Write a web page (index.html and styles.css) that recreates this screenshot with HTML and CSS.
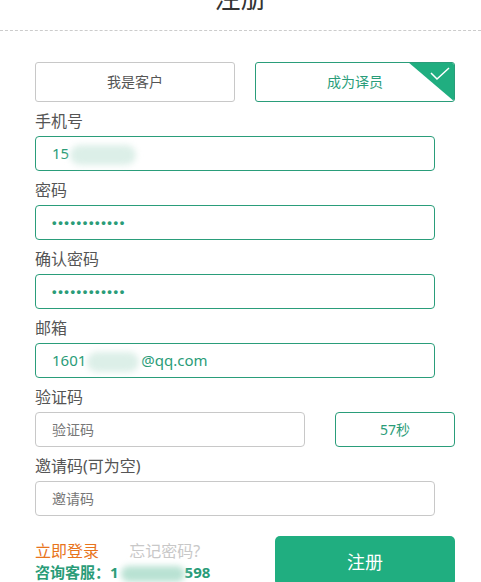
FILE: index.html
```html
<!DOCTYPE html>
<html lang="zh-CN">
<head>
    <meta charset="UTF-8">
    <meta name="viewport" content="width=device-width, initial-scale=1.0">
    <title>注册</title>
    <link rel="stylesheet" href="styles.css">
</head>
<body>
    <h2 class="title">注册</h2>

    <div class="container">
        <div class="tabs">
            <div class="tab">我是客户</div>
            <div class="tab active">
                成为译员
                <span class="corner">
                    <svg width="20" height="14" viewBox="0 0 20 14">
                        <polyline points="1,6 7,12 19,1" fill="none" stroke="#fff" stroke-width="1.5" />
                    </svg>
                </span>
            </div>
        </div>

        <div class="field">
            <label>手机号</label>
            <div class="input filled">15<span class="blur blur-phone"></span></div>
        </div>

        <div class="field">
            <label>密码</label>
            <div class="input filled dots">••••••••••••</div>
        </div>

        <div class="field">
            <label>确认密码</label>
            <div class="input filled dots">••••••••••••</div>
        </div>

        <div class="field">
            <label>邮箱</label>
            <div class="input filled">1601<span class="blur blur-mail"></span>@qq.com</div>
        </div>

        <div class="field">
            <label>验证码</label>
            <div class="code-row">
                <div class="input code">验证码</div>
                <div class="countdown">57秒</div>
            </div>
        </div>

        <div class="field">
            <label>邀请码(可为空)</label>
            <div class="input">邀请码</div>
        </div>

        <div class="footer">
            <div class="links">
                <div>
                    <a href="#" class="login-link">立即登录</a>
                    <a href="#" class="forgot-link">忘记密码?</a>
                </div>
                <div class="service">咨询客服：1<span class="blur blur-tel"></span>598</div>
            </div>
            <button type="button" class="submit">注册</button>
        </div>
    </div>
</body>
</html>
```

FILE: styles.css
```css
body {
    font-family: "Noto Sans", "Noto Sans CJK SC", sans-serif;
    background-color: #fff;
    margin: 0;
    padding: 0;
    overflow: hidden;
}

.title {
    margin: -22px 0 0;
    height: 53px;
    line-height: 40px;
    font-size: 26px;
    font-weight: normal;
    color: #333;
    text-align: center;
    border-bottom: 1px dashed #ccc;
    box-sizing: border-box;
}

.container {
    padding: 31px 0 0 35px;
    width: 420px;
}

.tabs {
    display: flex;
    gap: 20px;
    margin-bottom: 8px;
}

.tab {
    position: relative;
    width: 200px;
    height: 40px;
    line-height: 38px;
    box-sizing: border-box;
    border: 1px solid #c8c8c8;
    border-radius: 3px;
    text-align: center;
    font-size: 14px;
    color: #555;
    overflow: hidden;
}

.tab.active {
    border-color: #2a9d7a;
    color: #2a9d7a;
}

.corner {
    position: absolute;
    top: -1px;
    right: -1px;
    width: 47px;
    height: 40px;
    background-color: #20ae80;
    clip-path: polygon(0 0, 100% 0, 100% 100%);
}

.corner svg {
    position: absolute;
    top: 5px;
    right: 5px;
}

.field {
    margin-bottom: 8px;
}

label {
    display: block;
    height: 22px;
    line-height: 22px;
    font-size: 16px;
    color: #555;
    margin-bottom: 4px;
}

.input {
    width: 400px;
    height: 35px;
    line-height: 33px;
    box-sizing: border-box;
    border: 1px solid #c8c8c8;
    border-radius: 4px;
    padding: 0 16px;
    font-size: 14px;
    color: #777;
}

.input.filled {
    border-color: #2a9d7a;
    color: #2a9c78;
    font-size: 15px;
}

.input.dots {
    font-family: "Liberation Sans", sans-serif;
    font-size: 13px;
    letter-spacing: 1.6px;
    font-weight: bold;
}

.blur {
    display: inline-block;
    vertical-align: middle;
    height: 20px;
    border-radius: 10px;
    background-color: #dcefe8;
    filter: blur(3px);
}

.blur-phone {
    width: 66px;
    margin-left: 1px;
}

.blur-mail {
    width: 52px;
    margin: 0 2px 0 1px;
}

.blur-tel {
    width: 64px;
    height: 16px;
    margin: 0 0 0 2px;
    background-color: #b9e2d3;
}

.code-row {
    display: flex;
    justify-content: space-between;
}

.input.code {
    width: 270px;
}

.countdown {
    width: 120px;
    height: 35px;
    line-height: 33px;
    box-sizing: border-box;
    border: 1px solid #2a9d7a;
    border-radius: 4px;
    text-align: center;
    font-size: 14px;
    color: #2a9c78;
}

.footer {
    display: flex;
    justify-content: space-between;
    margin-top: 20px;
}

.links {
    padding-top: 4px;
    font-size: 16px;
    line-height: 22px;
}

.login-link {
    color: #e8741c;
    text-decoration: none;
    margin-right: 26px;
}

.forgot-link {
    color: #c8c8c8;
    text-decoration: none;
}

.service {
    font-size: 15px;
    font-weight: bold;
    color: #2a9c78;
    line-height: 20px;
}

.submit {
    width: 180px;
    height: 50px;
    background-color: #20ae80;
    color: #fff;
    border: none;
    border-radius: 5px;
    font-family: inherit;
    font-size: 18px;
    padding: 0;
    cursor: pointer;
}
```
